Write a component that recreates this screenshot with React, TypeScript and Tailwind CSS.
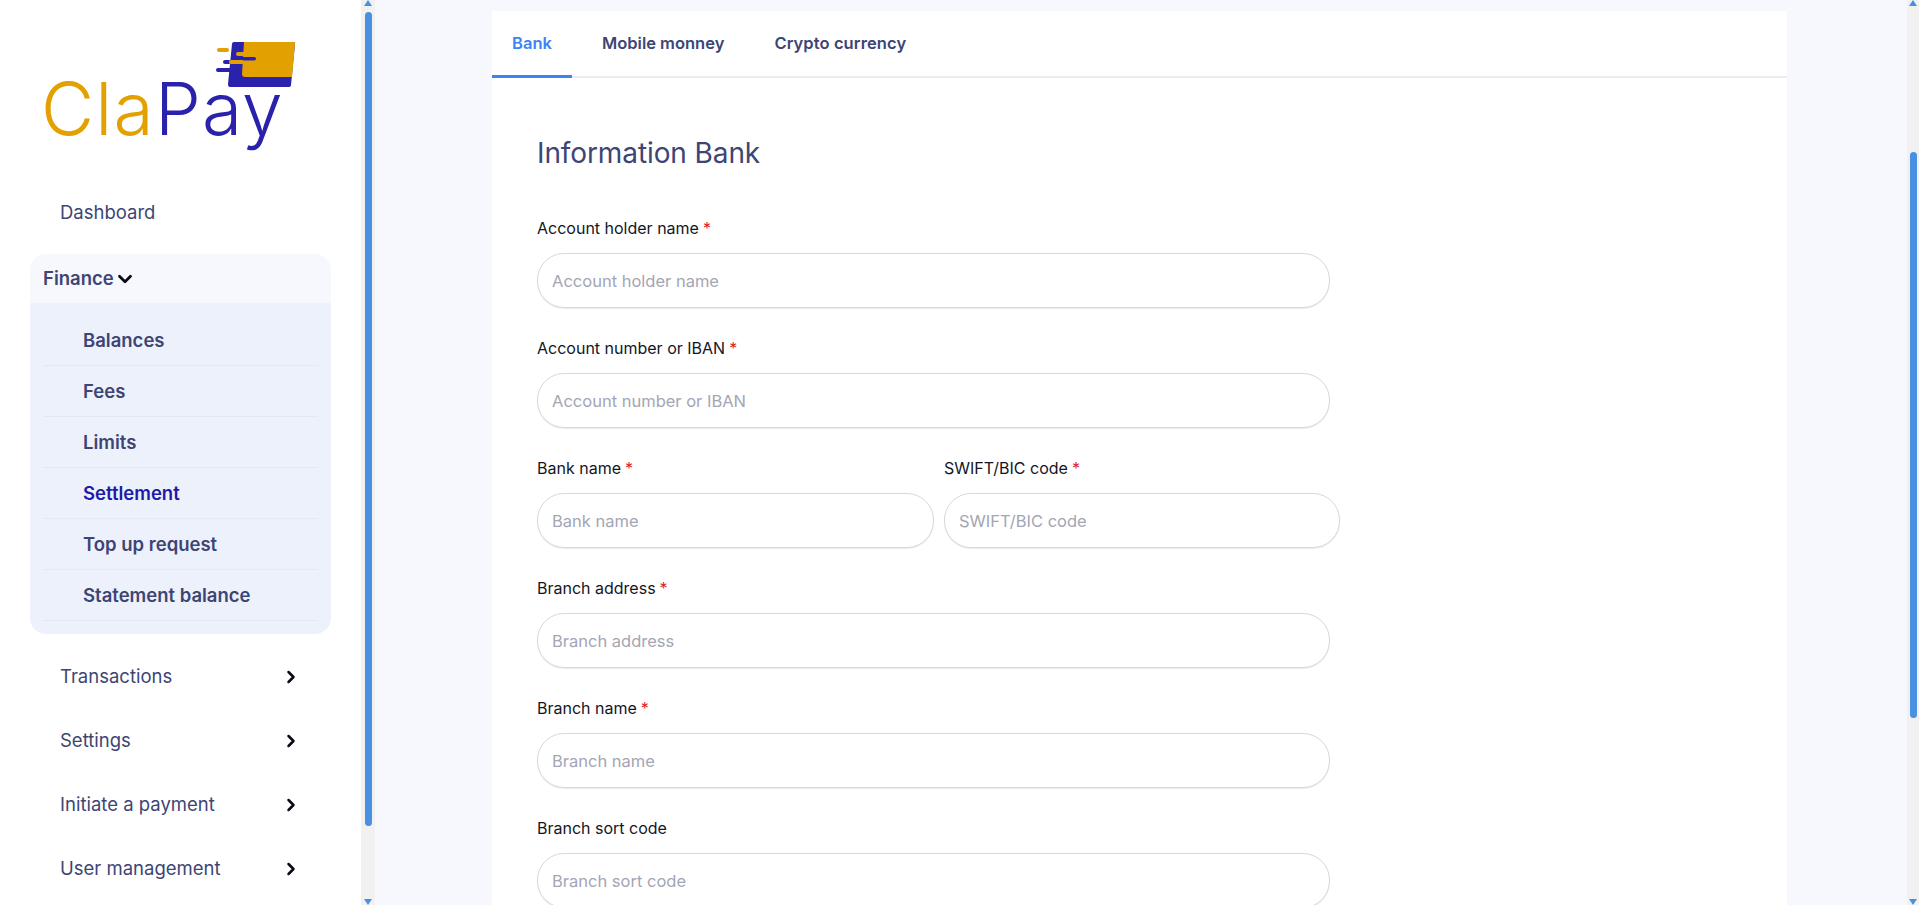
import { ChevronDown, ChevronRight } from "lucide-react";

const subItems = ["Balances", "Fees", "Limits", "Settlement", "Top up request", "Statement balance"];
const navItems = ["Transactions", "Settings", "Initiate a payment", "User management"];

function Logo() {
  return (
    <div className="relative h-[130px] w-[300px]">
      <svg className="absolute left-[214px] top-[40px]" width="85" height="50" viewBox="0 0 85 50">
        <path d="M18 4 Q18 2 20 2 H80 Q81 2 81 4 L77 45 Q77 47 74 47 H16 Q14 47 14 44 Z" fill="#2a22ad" />
        <path d="M30 2 H80 Q81 2 81 4 L78 37 H31 Q28 37 28 34 Z" fill="#e2a100" />
        <rect x="3" y="8" width="12" height="4" rx="2" fill="#e2a100" />
        <rect x="22" y="12" width="12" height="4" rx="2" fill="#e2a100" />
        <rect x="22" y="17" width="20" height="3.5" rx="1.75" fill="#2a22ad" />
        <rect x="9" y="20" width="8" height="4" rx="2" fill="#2a22ad" />
        <rect x="15" y="20" width="15" height="4" rx="2" fill="#e2a100" />
        <rect x="2" y="28" width="20" height="4" rx="2" fill="#2a22ad" />
      </svg>
      <div className="absolute left-[41px] top-[66px] text-[73px] leading-[86px] font-light tracking-[1.2px]">
        <span className="text-[#e2a100]">Cla</span>
        <span className="text-[#2a22ad]">Pay</span>
      </div>
    </div>
  );
}

function ScrollBar({ top, height, className }: { top: string; height: string; className: string }) {
  return (
    <div className={`flex h-full flex-shrink-0 flex-col items-center justify-between bg-[#f1f1f1] ${className}`}>
      <div className="h-0 w-0 border-x-[4px] border-b-[6px] border-x-transparent border-b-[#4a90e2]" />
      <div className="flex w-full flex-1 flex-col items-center">
        <div className={`w-[7px] flex-shrink-0 ${top}`} />
        <div className={`w-[7px] flex-shrink-0 rounded-full bg-[#4a90e2] ${height}`} />
      </div>
      <div className="h-0 w-0 border-x-[4px] border-t-[6px] border-x-transparent border-t-[#4a90e2]" />
    </div>
  );
}

function Field({ label, required, width = "w-[793px]" }: { label: string; required?: boolean; width?: string }) {
  return (
    <div className={`flex-shrink-0 ${width}`}>
      <label className="block h-[20px] text-[16px] leading-[20px] text-[#14161f]">
        {label}
        {required && <span className="ml-1 text-[#e0202a]">*</span>}
      </label>
      <input
        placeholder={label}
        className="mt-[15px] h-[55px] w-full rounded-[27px] border-[1.5px] border-[#d6d8e0] bg-white px-[14px] text-[16.5px] text-[#14161f] shadow-[0_1px_1px_rgba(0,0,0,0.08)] outline-none placeholder:text-[#a3a6b4]"
      />
    </div>
  );
}

export default function App() {
  return (
    <div className="h-[913px] w-full overflow-hidden bg-white font-['Inter',sans-serif]">
      <div className="flex h-[905px]">
        {/* sidebar */}
        <aside className="w-[361px] flex-shrink-0 overflow-hidden bg-white">
          <Logo />
          <div className="mt-[48px] flex h-[70px] items-center pl-[60px] text-[18.5px] text-[#3d4574]">Dashboard</div>
          <div className="mt-[6px] ml-[30px] w-[301px] overflow-hidden rounded-[16px]">
            <div className="flex h-[49px] items-center bg-[#f6f8fd] pl-[13px] text-[18.5px] font-semibold text-[#3d4574]">
              Finance
              <ChevronDown size={22} strokeWidth={3} className="text-[#0a0a14]" />
            </div>
            <div className="bg-[#edf1fc] px-[13px] pt-[12px] pb-[13px]">
              {subItems.map((s) => (
                <div
                  key={s}
                  className={`flex h-[51px] items-center border-b border-[#e5e7f2] pt-[2px] pl-[40px] text-[18.5px] font-semibold ${
                    s === "Settlement" ? "text-[#1f1aa8]" : "text-[#3d4574]"
                  }`}
                >
                  {s}
                </div>
              ))}
            </div>
          </div>
          <div className="mt-[11px]">
            {navItems.map((n) => (
              <div key={n} className="flex h-[64px] items-center justify-between pr-[60px] pl-[60px] text-[18.5px] text-[#3d4574]">
                {n}
                <ChevronRight size={20} strokeWidth={3} className="text-[#0a0a14]" />
              </div>
            ))}
          </div>
        </aside>
        <ScrollBar top="h-[6px]" height="h-[814px]" className="w-[14px]" />

        {/* main */}
        <main className="flex-1 overflow-hidden bg-[#f6f8fd] pt-[11px] pl-[117px]">
          <div className="h-[1000px] w-[1295px] bg-white">
            <div className="flex h-[67px] border-b-2 border-[#ececf0]">
              <div className="h-[67px] w-[80px] border-b-[3px] border-[#3b82f6] pt-[21px] text-center text-[16.5px] leading-[22px] font-semibold text-[#3b82f6]">
                Bank
              </div>
              <div className="ml-[30px] pt-[21px] text-[16.5px] leading-[22px] font-semibold text-[#3d4574]">Mobile monney</div>
              <div className="ml-[50px] pt-[21px] text-[16.5px] leading-[22px] font-semibold tracking-[0.1px] text-[#3d4574]">Crypto currency</div>
            </div>
            <div className="px-[45px]">
              <h2 className="mt-[58px] text-[28px] leading-[34px] font-normal tracking-[-0.1px] text-[#3d4574]">Information Bank</h2>
              <div className="mt-[48px] flex flex-col gap-[30px]">
                <Field label="Account holder name" required />
                <Field label="Account number or IBAN" required />
                <div className="flex gap-[10px]">
                  <Field label="Bank name" required width="w-[397px]" />
                  <Field label="SWIFT/BIC code" required width="w-[396px]" />
                </div>
                <Field label="Branch address" required />
                <Field label="Branch name" required />
                <Field label="Branch sort code" />
              </div>
            </div>
          </div>
        </main>
        <ScrollBar top="h-[146px]" height="h-[566px]" className="w-[12px]" />
      </div>
    </div>
  );
}
